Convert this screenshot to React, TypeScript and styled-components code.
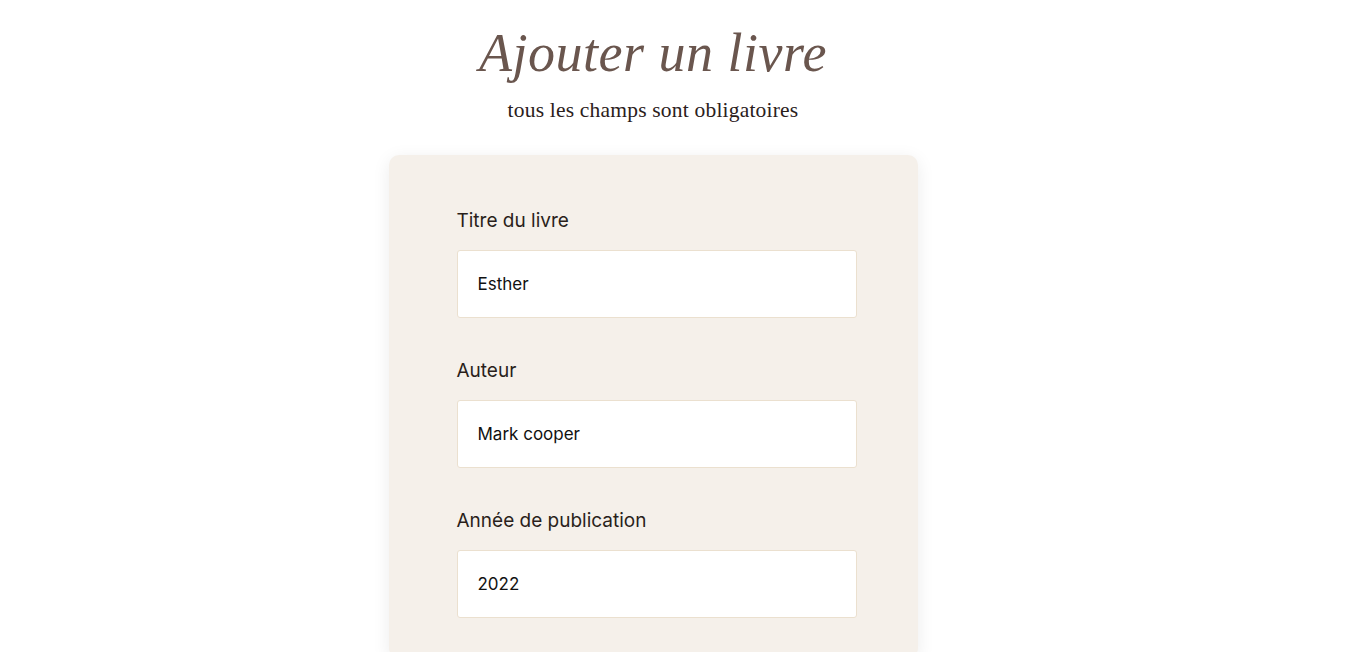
import React from "react";
import styled, { createGlobalStyle } from "styled-components";

const Global = createGlobalStyle`
  html, body { margin: 0; padding: 0; background: #ffffff; }
  * { box-sizing: border-box; }
`;

const Page = styled.main`
  width: 1352px;
  height: 652px;
  overflow: hidden;
  display: flex;
  flex-direction: column;
  align-items: center;
  padding: 22px 46px 0 0;
`;

const Title = styled.h1`
  margin: 0;
  font-family: "Liberation Serif", "DejaVu Serif", serif;
  font-style: italic;
  font-weight: 400;
  font-size: 54px;
  line-height: 62px;
  color: #6a564e;
  letter-spacing: 0.5px;
`;

const Subtitle = styled.p`
  margin: 13px 0 0;
  font-family: "Liberation Serif", "DejaVu Serif", serif;
  font-size: 21.5px;
  line-height: 26px;
  color: #2b201b;
  letter-spacing: 0.2px;
`;

const Card = styled.form`
  margin-top: 32px;
  width: 529px;
  background: #f5f0ea;
  border-radius: 10px;
  box-shadow: 0 4px 18px rgba(0, 0, 0, 0.08);
  padding: 53px 61px 40px 68px;
  display: flex;
  flex-direction: column;
  gap: 40px;
`;

const Field = styled.div`
  display: flex;
  flex-direction: column;
  gap: 16px;
`;

const Label = styled.label`
  font-family: "Inter", "Noto Sans", sans-serif;
  font-size: 19px;
  line-height: 26px;
  color: #2a1f1b;
`;

const Input = styled.input`
  width: 400px;
  height: 68px;
  border: 1px solid #ebe0cf;
  border-radius: 3px;
  background: #ffffff;
  padding: 0 20px;
  font-family: "Inter", "Noto Sans", sans-serif;
  font-size: 17px;
  color: #111111;
  outline: none;
`;

const fields = [
  { id: "titre", label: "Titre du livre", value: "Esther" },
  { id: "auteur", label: "Auteur", value: "Mark cooper" },
  { id: "annee", label: "Année de publication", value: "2022" },
];

export default function App() {
  return (
    <>
      <Global />
      <Page>
        <Title>Ajouter un livre</Title>
        <Subtitle>tous les champs sont obligatoires</Subtitle>
        <Card>
          {fields.map((f) => (
            <Field key={f.id}>
              <Label htmlFor={f.id}>{f.label}</Label>
              <Input id={f.id} defaultValue={f.value} />
            </Field>
          ))}
        </Card>
      </Page>
    </>
  );
}
